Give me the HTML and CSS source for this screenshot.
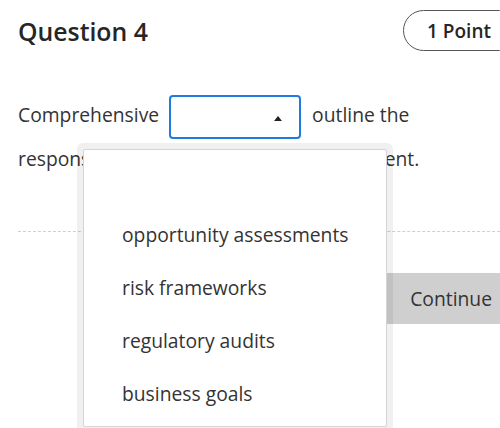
FILE: index.html
```html
<!DOCTYPE html>
<html lang="en">
<head>
<meta charset="utf-8">
<title>Question 4</title>
<link rel="stylesheet" href="styles.css">
</head>
<body>
<div class="page">
  <header class="q-header">
    <h1 class="q-title">Question 4</h1>
    <span class="q-points">1 Point</span>
  </header>
  <p class="q-text">Comprehensive <span class="select"><span class="select-arrow"></span></span> outline the responsibilities for project risk management.</p>
  <hr class="divider">
  <div class="actions">
    <button class="continue">Continue</button>
  </div>
  <div class="listbox">
    <ul class="listbox-inner">
      <li class="option">&nbsp;</li>
      <li class="option">opportunity assessments</li>
      <li class="option">risk frameworks</li>
      <li class="option">regulatory audits</li>
      <li class="option">business goals</li>
    </ul>
  </div>
</div>
</body>
</html>
```
FILE: styles.css
```css
html, body {
  margin: 0;
  padding: 0;
  background: #fff;
  overflow: hidden;
}
body {
  font-family: "Open Sans", "DejaVu Sans", sans-serif;
  color: #333;
  width: 500px;
  height: 428px;
  position: relative;
}
.page {
  width: 520px;
  box-sizing: border-box;
  padding: 10px 0 0 18px;
}
.q-header {
  display: flex;
  justify-content: space-between;
  align-items: center;
  height: 41px;
}
.q-title {
  margin: 0;
  font-size: 24.8px;
  font-weight: 600;
  color: #262626;
}
.q-points {
  box-sizing: border-box;
  height: 41px;
  display: flex;
  align-items: center;
  padding: 0 28px 0 23px;
  border: 1px solid #555;
  border-radius: 21px;
  font-size: 19px;
  font-weight: 600;
  color: #262626;
}
.q-text {
  margin: 44px 0 0 0;
  font-size: 19.3px;
  line-height: 40px;
  width: 470px;
}
.select {
  display: inline-block;
  box-sizing: border-box;
  width: 132px;
  height: 44px;
  border: 2px solid #1f7be0;
  border-radius: 4px;
  vertical-align: middle;
  position: relative;
  margin: 0 6px 0 5px;
}
.select-arrow {
  position: absolute;
  right: 17px;
  top: 19px;
  width: 0;
  height: 0;
  border-left: 4.5px solid transparent;
  border-right: 4.5px solid transparent;
  border-bottom: 5px solid #222;
}
.divider {
  margin: 52px 0 0 0;
  border: 0;
  border-top: 1px dashed #d0d0d0;
  height: 0;
}
.actions {
  display: flex;
  justify-content: flex-end;
  margin-top: 41px;
}
.continue {
  height: 51px;
  padding: 0 28px 0 24px;
  border: 0;
  background: #cfcfcf;
  font-family: "Open Sans", "DejaVu Sans", sans-serif;
  font-size: 19.3px;
  color: #333;
}
.listbox {
  position: absolute;
  left: 77px;
  top: 143px;
  width: 316px;
  height: 300px;
  box-sizing: border-box;
  padding: 6px 6px 0 6px;
  background: rgba(0, 0, 0, 0.06);
  border-radius: 6px 6px 0 0;
}
.listbox-inner {
  margin: 0;
  list-style: none;
  box-sizing: border-box;
  height: 278px;
  padding: 5px 0 0 38px;
  background: #fff;
  border: 1px solid #d4d4d4;
  border-radius: 2px;
}
.option {
  height: 53px;
  line-height: 53px;
  font-size: 19.3px;
  color: #333;
  white-space: nowrap;
}
```
